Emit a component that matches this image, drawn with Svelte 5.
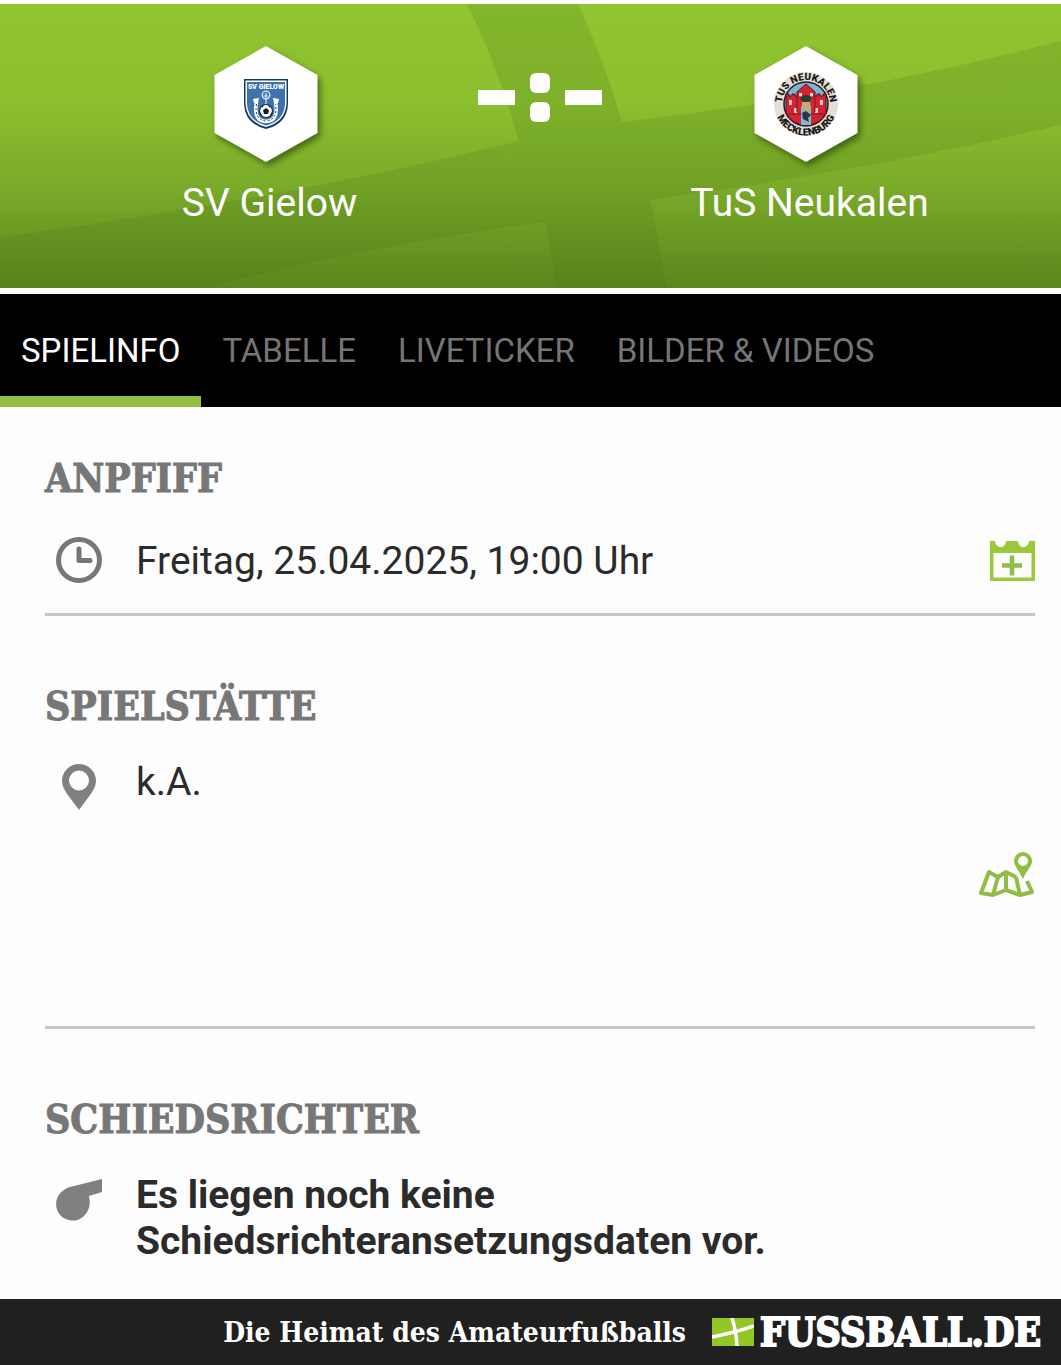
<script lang="ts">
  type Tab = { id: string; label: string };

  const tabs: Tab[] = [
    { id: 'info', label: 'SPIELINFO' },
    { id: 'table', label: 'TABELLE' },
    { id: 'ticker', label: 'LIVETICKER' },
    { id: 'media', label: 'BILDER & VIDEOS' },
  ];

  let activeTab = $state('info');
</script>

<div class="page">
  <header class="match">
    <svg class="pitch" viewBox="0 0 1061 284" preserveAspectRatio="none" aria-hidden="true">
      <path d="M467 0H578Q604 56 622 118Q850 92 1061 37V121Q860 168 650 196Q660 240 666 284H556Q552 250 545 218Q370 241 203 284H0V233Q270 198 519 137Q497 60 467 0Z" />
    </svg>

    <div class="team">
      <svg class="crest" width="112" height="124" viewBox="0 0 112 124" role="img" aria-label="Wappen SV Gielow">
        <path class="hex" d="M52 0L103.500 29V87L52 116L.5 87V29Z" />
        <path d="M30 33H74V58Q73 78 52 83Q31 78 30 58Z" fill="#173a60" />
        <path d="M31.500 34.500H72.500V58Q71 76 52 81Q33 76 31.500 58Z" fill="#fff" />
        <path d="M33 36H71V58Q70 75 52 79.500Q34 75 33 58Z" fill="#3d72ab" />
        <text x="52" y="43" font-size="7" font-weight="900" fill="#fff" text-anchor="middle">SV GIELOW</text>
        <circle cx="52" cy="49" r="3.800" fill="none" stroke="#dce8f2" stroke-width="1.300" />
        <path d="M52 47V59M49.500 50H54.500" stroke="#dce8f2" stroke-width="1.200" />
        <path d="M42.500 56Q39 75 52 75.500Q65 75 61.500 56" fill="none" stroke="#fff" stroke-width="3.500" />
        <path d="M42.500 58Q40 74 52 75Q64 74 61.500 58" fill="none" stroke="#1b3654" stroke-width="1" stroke-dasharray="2 2" />
        <path d="M39 53L45 52L44 57L40 57ZM65 53L59 52L60 57L64 57Z" fill="#fff" />
        <circle cx="52" cy="65" r="6.500" fill="#fff" stroke="#1c2c3d" stroke-width="1.200" />
        <path d="M52 62L55 64.300L54 68H50L49 64.300ZM48 60L50 59L48 62ZM56 60L54 59L56 62ZM46 66L48 69L46.500 69ZM58 66L56 69L57.500 69Z" fill="#141b24" />
      </svg>
      <span class="team-name">SV Gielow</span>
    </div>

    <div class="score" role="img" aria-label="Noch kein Ergebnis">
      <span class="dash"></span>
      <span class="colon"><i></i><i></i></span>
      <span class="dash"></span>
    </div>

    <div class="team">
      <svg class="crest" width="112" height="124" viewBox="0 0 112 124" role="img" aria-label="Wappen TuS Neukalen">
        <path class="hex" d="M52 0L103.500 29V87L52 116L.5 87V29Z" />
        <circle cx="52" cy="58" r="32" fill="#e6ded4" />
        <circle cx="52" cy="58" r="22" fill="#7fb5d3" stroke="#221f20" stroke-width="1.500" />
        <path d="M32 67V48H35V50H38V48H41V50H43V46L52 38L61 46V50H63V48H66V50H69V48H72V67Q66 79 52 79Q38 79 32 67Z" fill="#d52332" stroke="#55131c" />
        <path d="M35 54H38V59H35ZM66 54H69V59H66ZM40 62H43V67H40ZM61 62H64V67H61ZM45 47H48V51H45ZM56 47H59V51H56Z" fill="#f4cfc9" />
        <path d="M32 68H72M43 51H61M43 51V66M61 51V66" stroke="#7a1821" />
        <path d="M47 79V61Q52 54 57 61V79Z" fill="#83b6d1" />
        <ellipse cx="52" cy="52.500" rx="5.500" ry="3.500" fill="#273e32" />
        <path d="M48 56H56L57 62L53 66L48 62Z" fill="#c2ac75" />
        <path d="M48 67L52 65L57 69L54 72L55 76L49 73Z" fill="#293744" />
        <path id="arc-top" d="M28 58A24 24 0 0 1 76 58" fill="none" />
        <path id="arc-bottom" d="M20.500 58A31.500 31.500 0 0 0 83.500 58" fill="none" />
        <text class="ring"><textPath href="#arc-top" startOffset="50%">TUS NEUKALEN</textPath></text>
        <text class="ring"><textPath href="#arc-bottom" startOffset="50%">MECKLENBURG</textPath></text>
      </svg>
      <span class="team-name">TuS Neukalen</span>
    </div>
  </header>

  <nav class="tabs">
    {#each tabs as tab (tab.id)}
      <button
        class="tab"
        class:active={activeTab === tab.id}
        aria-current={activeTab === tab.id ? 'page' : undefined}
        onclick={() => (activeTab = tab.id)}
      >{tab.label}</button>
    {/each}
  </nav>

  <main>
    <section class="kickoff">
      <h2>ANPFIFF</h2>
      <div class="row">
        <svg class="icon" viewBox="0 0 46 46" aria-hidden="true">
          <circle cx="23" cy="22" r="20.500" fill="none" stroke="#777" stroke-width="5" />
          <path d="M23 11V22.500H34" fill="none" stroke="#777" stroke-width="5" stroke-linecap="round" stroke-linejoin="round" />
        </svg>
        <p>Freitag, 25.04.2025, 19:00 Uhr</p>
        <button class="action" aria-label="Zum Kalender hinzufügen">
          <svg width="46" height="42" viewBox="0 0 46 42" aria-hidden="true">
            <path fill-rule="evenodd" d="M1 1H6Q7 7 12 7Q16 7 17 1H29Q30 7 34 7Q39 7 40 1H46V41H1ZM4.500 13V37.500H42.500V13Z" fill="#9aca3c" />
            <path d="M23 15.500V35.500M13 25.500H33" stroke="#8fbd45" stroke-width="4.500" />
          </svg>
        </button>
      </div>
    </section>

    <section class="venue">
      <h2>SPIELSTÄTTE</h2>
      <div class="row">
        <svg class="icon" viewBox="0 0 46 46" aria-hidden="true">
          <path fill-rule="evenodd" d="M23 0A17 17 0 0 1 40 17C40 26 31 34 23 46C15 34 6 26 6 17A17 17 0 0 1 23 0ZM23 6.500A10 10 0 1 0 23 26.500A10 10 0 1 0 23 6.500Z" fill="#808080" />
        </svg>
        <p>k.A.</p>
        <button class="action" aria-label="Karte öffnen">
          <svg width="56" height="46" viewBox="0 0 56 46" aria-hidden="true">
            <g fill="none" stroke="#8fbd45" stroke-width="4" stroke-linejoin="round">
              <path d="M37 25L27 20L19 25L10 20L2 41L14 43L27 38L41 43L53 40L48 29" />
              <path d="M19 25L14 43M27 20V38M37 25L41 43" />
            </g>
            <path fill-rule="evenodd" d="M44 0A9 9 0 0 1 53 9C53 14 48 18 44 27C40 18 35 14 35 9A9 9 0 0 1 44 0ZM44 4A5 5 0 1 0 44 14A5 5 0 1 0 44 4Z" fill="#8fbd45" />
          </svg>
        </button>
      </div>
    </section>

    <section class="referee">
      <h2>SCHIEDSRICHTER</h2>
      <div class="row">
        <svg class="icon" viewBox="0 0 46 46" aria-hidden="true">
          <path d="M46 2V15L33 19Q36 31 28 39A16.500 16.500 0 1 1 8 13Q11 10 18 9Z" fill="#808080" />
        </svg>
        <p>Es liegen noch keine Schiedsrichteransetzungsdaten vor.</p>
      </div>
    </section>
  </main>

  <footer>
    <span class="claim">Die Heimat des Amateurfußballs</span>
    <a class="brand" href="#fussball">
      <svg width="42" height="28" viewBox="0 0 42 28" aria-hidden="true">
        <path d="M0 0H42V28H0Z" fill="#93c728" />
        <path d="M20 0Q24 12 25 28M0 19Q22 15 42 8" fill="none" stroke="#fff" stroke-width="3.500" />
      </svg>
      <span>FUSSBALL.DE</span>
    </a>
  </footer>
</div>

<style>
  :global(body) {
    margin: 0;
    background: #fdfdfd;
  }
  .page {
    min-height: 100vh;
    display: flex;
    flex-direction: column;
    font-family: Roboto, "Liberation Sans", sans-serif;
    color: #2b2b2b;
  }
  button {
    border: none;
    background: none;
    padding: 0;
    font: inherit;
    color: inherit;
    cursor: pointer;
  }
  .match {
    position: relative;
    display: flex;
    justify-content: center;
    margin: 4px 0 6px;
    padding: 42px 0 59px 18px;
    background: linear-gradient(#90c430 0%, #8bbf2e 35%, #7aaa2a 65%, #5a871c 100%);
  }
  .pitch {
    position: absolute;
    inset: 0;
    width: 100%;
    height: 100%;
    fill: #416f16;
    fill-opacity: 0.17;
  }
  .team {
    position: relative;
    width: 270px;
    display: flex;
    flex-direction: column;
    align-items: center;
  }
  .crest {
    overflow: visible;
  }
  .hex {
    fill: #fff;
    filter: drop-shadow(3px 4px 3px rgba(30, 60, 0, 0.6));
  }
  .ring {
    font-size: 10px;
    font-weight: 900;
    text-anchor: middle;
    fill: #171717;
  }
  .team-name {
    margin-top: 7px;
    font-size: 39px;
    line-height: 52px;
    color: #fff;
    white-space: nowrap;
  }
  .score {
    position: relative;
    width: 270px;
    height: 102px;
    display: flex;
    align-items: center;
    justify-content: center;
    gap: 15px;
  }
  .dash {
    width: 37px;
    height: 15px;
    background: #fff;
  }
  .colon {
    display: flex;
    flex-direction: column;
    gap: 9px;
  }
  .colon i {
    width: 20px;
    height: 20px;
    border-radius: 6px;
    background: #fff;
  }
  .tabs {
    display: flex;
    background: #000;
  }
  .tab {
    padding: 11px 21px 0;
    height: 113px;
    border-bottom: 11px solid transparent;
    font-size: 33px;
    color: #757575;
    white-space: nowrap;
  }
  .tab.active {
    color: #fff;
    border-bottom-color: #93bf45;
  }
  main {
    flex: 1;
    padding: 0 26px 34px 45px;
  }
  section {
    padding: 70px 0 24px;
    border-bottom: 3px solid #c8c8c8;
  }
  .kickoff {
    padding-top: 51px;
    padding-bottom: 23px;
  }
  .referee {
    padding-bottom: 0;
    border-bottom: none;
  }
  h2 {
    margin: 0 0 33px;
    font-family: "DejaVu Serif Condensed", "DejaVu Serif", serif;
    font-size: 39px;
    line-height: 40px;
    font-weight: bold;
    color: #777;
    -webkit-text-stroke: 1px #777;
  }
  .row {
    display: flex;
    align-items: flex-start;
    padding-left: 11px;
  }
  .kickoff .row {
    align-items: center;
    padding-top: 7px;
    padding-bottom: 6px;
  }
  .venue .row {
    min-height: 237px;
    padding-bottom: 6px;
    box-sizing: border-box;
  }
  .venue {
    padding-bottom: 30px;
  }
  .icon {
    flex: none;
    width: 46px;
    height: 46px;
    margin-top: 5px;
    margin-right: 34px;
    overflow: visible;
  }
  .kickoff .icon {
    margin-top: 0;
  }
  .row p {
    flex: 1;
    margin: 0;
    font-size: 39px;
    line-height: 46px;
  }
  .referee p {
    max-width: 660px;
    font-weight: bold;
  }
  .action {
    align-self: center;
    display: flex;
  }
  footer {
    display: flex;
    align-items: center;
    justify-content: flex-end;
    gap: 26px;
    height: 66px;
    padding-right: 20px;
    background: #202020;
    color: #fff;
    font-family: "DejaVu Serif Condensed", "DejaVu Serif", serif;
    font-weight: bold;
    white-space: nowrap;
  }
  .claim {
    font-size: 28px;
  }
  .brand {
    display: flex;
    align-items: center;
    gap: 6px;
    color: inherit;
    text-decoration: none;
    font-size: 39px;
    -webkit-text-stroke: 2px #fff;
  }
</style>
